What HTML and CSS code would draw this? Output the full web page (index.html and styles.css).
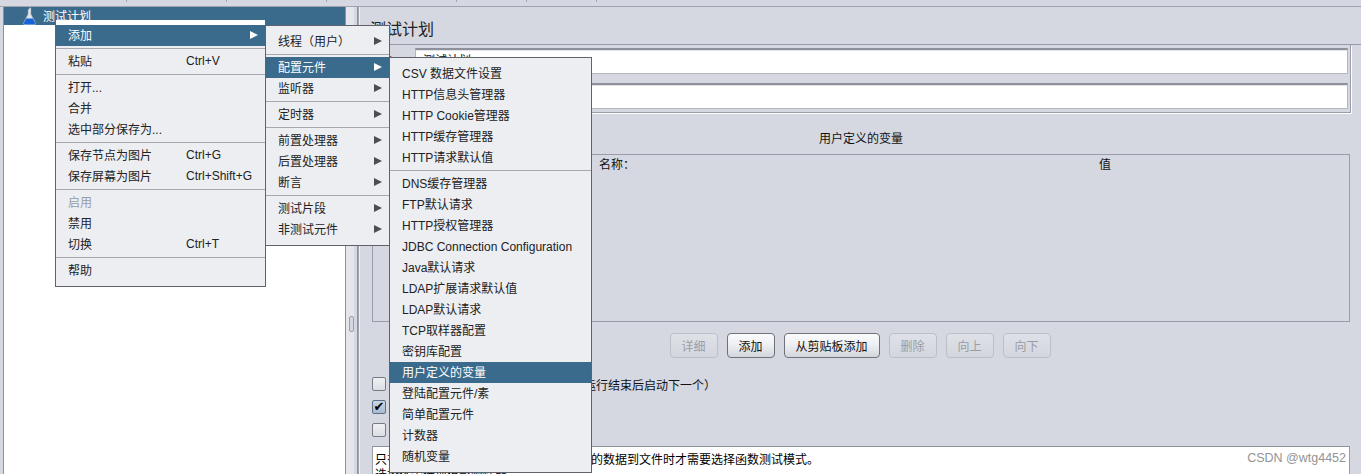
FILE: index.html
```html
<!DOCTYPE html>
<html lang="zh">
<head>
<meta charset="utf-8">
<title>JMeter 测试计划</title>
<link rel="stylesheet" href="styles.css">
</head>
<body>
<div class="app">
  <div class="toolbar"><i></i><i></i><i></i><i></i><i></i><i></i></div>
  <div class="workspace">
    <aside class="tree">
      <div class="tree-row">
        <svg class="flask" width="13" height="18" viewBox="0 0 13 18"><path d="M7 0.500l1 .5v6l4.300 8.500q.7 2-1 2.500H1.700q-1.700-.5-1-2.500L5 7V3z" fill="#dfe4ea" stroke="#8a97a6" stroke-width=".6"/><path d="M3.200 11.500h6.600l2.200 4.200q.2 1.800-1 1.800H2q-1.200 0-1-1.800z" fill="#1463d8"/></svg>
        <span>测试计划</span>
      </div>
    </aside>
    <div class="divider"><span class="grip"></span></div>
    <main class="panel">
      <h1 class="title">测试计划</h1>
      <section class="fields">
        <div class="field-row"><label>名称：</label><div class="input">测试计划</div></div>
        <div class="field-row"><label>注释：</label><div class="input"></div></div>
      </section>
      <h2 class="table-title">用户定义的变量</h2>
      <section class="vars">
        <div class="vars-head"><span>名称：</span><span>值</span></div>
      </section>
      <div class="buttons">
        <button class="btn off">详细</button>
        <button class="btn">添加</button>
        <button class="btn wide">从剪贴板添加</button>
        <button class="btn off">删除</button>
        <button class="btn off">向上</button>
        <button class="btn off">向下</button>
      </div>
      <div class="checks">
        <div class="check"><span class="box"></span>独立运行每个线程组（例如在一个组运行结束后启动下一个）</div>
        <div class="check"><span class="box on">✔</span>主线程结束后运行 tearDown 线程组</div>
        <div class="check"><span class="box"></span>函数测试模式</div>
      </div>
      <div class="note">只有当你需要记录每个请求从服务器取得的数据到文件时才需要选择函数测试模式。<br>选择这个选项很影响性能。</div>
    </main>
  </div>

  <nav class="menu menu-main">
    <div class="item sel">添加<b class="arrow"></b></div>
    <hr>
    <div class="item">粘贴<kbd>Ctrl+V</kbd></div>
    <hr>
    <div class="item">打开...</div>
    <div class="item">合并</div>
    <div class="item">选中部分保存为...</div>
    <hr>
    <div class="item">保存节点为图片<kbd>Ctrl+G</kbd></div>
    <div class="item">保存屏幕为图片<kbd>Ctrl+Shift+G</kbd></div>
    <hr>
    <div class="item dim">启用</div>
    <div class="item">禁用</div>
    <div class="item">切换<kbd>Ctrl+T</kbd></div>
    <hr>
    <div class="item">帮助</div>
  </nav>

  <nav class="menu menu-sub">
    <div class="item">线程（用户）<b class="arrow"></b></div>
    <hr>
    <div class="item sel">配置元件<b class="arrow"></b></div>
    <div class="item">监听器<b class="arrow"></b></div>
    <hr>
    <div class="item">定时器<b class="arrow"></b></div>
    <hr>
    <div class="item">前置处理器<b class="arrow"></b></div>
    <div class="item">后置处理器<b class="arrow"></b></div>
    <div class="item">断言<b class="arrow"></b></div>
    <hr>
    <div class="item">测试片段<b class="arrow"></b></div>
    <div class="item">非测试元件<b class="arrow"></b></div>
  </nav>

  <nav class="menu menu-config">
    <div class="item">CSV 数据文件设置</div>
    <div class="item">HTTP信息头管理器</div>
    <div class="item">HTTP Cookie管理器</div>
    <div class="item">HTTP缓存管理器</div>
    <div class="item">HTTP请求默认值</div>
    <hr>
    <div class="item">DNS缓存管理器</div>
    <div class="item">FTP默认请求</div>
    <div class="item">HTTP授权管理器</div>
    <div class="item">JDBC Connection Configuration</div>
    <div class="item">Java默认请求</div>
    <div class="item">LDAP扩展请求默认值</div>
    <div class="item">LDAP默认请求</div>
    <div class="item">TCP取样器配置</div>
    <div class="item">密钥库配置</div>
    <div class="item sel">用户定义的变量</div>
    <div class="item">登陆配置元件/素</div>
    <div class="item">简单配置元件</div>
    <div class="item">计数器</div>
    <div class="item">随机变量</div>
  </nav>

  <div class="watermark">CSDN @wtg4452</div>
</div>
</body>
</html>
```
FILE: styles.css
```css
* { box-sizing: border-box; }
html, body { margin: 0; padding: 0; }
body {
  font-family: "Liberation Sans", "Noto Sans CJK SC", sans-serif;
  font-size: 12px;
  color: #111;
  background: #d5d8e1;
}
.app {
  position: relative;
  width: 1361px;
  height: 474px;
  overflow: hidden;
  display: flex;
  flex-direction: column;
}
.toolbar {
  height: 7px;
  flex: none;
  display: flex;
  border-bottom: 1px solid #a0a3ad;
  padding-left: 126px;
}
.toolbar i {
  width: 1px;
  height: 2px;
  background: #a0a3ad;
  margin-right: 99px;
}
.toolbar i:nth-child(3) { margin-right: 129px; }
.toolbar i:nth-child(4), .toolbar i:nth-child(5) { margin-right: 69px; }
.workspace {
  flex: 1;
  display: flex;
  min-height: 0;
  padding-left: 3px;
}
.tree {
  width: 342px;
  flex: none;
  background: #fff;
  border-left: 1px solid #8e919c;
}
.tree-row {
  height: 18px;
  background: #3a6a8c;
  color: #fff;
  display: flex;
  align-items: center;
  gap: 7px;
  padding-left: 19px;
  font-size: 12px;
}
.tree-row span { margin-top: -2px; }
.flask { flex: none; }
.divider {
  width: 13px;
  flex: none;
  border-left: 1px solid #8e919c;
  border-right: 1px solid #8e919c;
  background: #e4e6ec;
  box-shadow: inset -3px 0 0 #d5d8e1;
  display: flex;
  justify-content: center;
  padding-top: 309px;
}
.grip {
  width: 5px;
  height: 16px;
  border: 1px solid #9a9da8;
  border-radius: 2px;
  background: #d5d8e1;
}
.panel {
  flex: 1;
  min-width: 0;
  padding: 0 11px 0 13px;
  border-left: 1px solid #a0a3ad;
  box-shadow: inset 1px 0 0 #eef0f4;
}
.title {
  margin: 0 -11px 0 -13px;
  height: 38px;
  padding: 11px 0 0 11px;
  font-size: 16px;
  line-height: 24px;
  font-weight: 400;
  color: #222;
  border-bottom: 1px solid #9a9da8;
}
.fields {
  margin-right: -1px;
  border-bottom: 1px solid #9a9da8;
  border-right: 1px solid #9a9da8;
  box-shadow: 1px 1px 0 #fff;
  height: 68px;
  padding: 3px 2px 2px 0;
  display: flex;
  flex-direction: column;
  gap: 9px;
}
.field-row {
  display: flex;
  align-items: center;
  height: 26px;
}
.field-row label { width: 43px; flex: none; }
.input {
  flex: 1;
  height: 26px;
  background: #fff;
  border: 1px solid #b4b6bc;
  border-top: 2px solid #8e919c;
  box-shadow: inset 0 1px 0 #e2e3e6;
  padding-left: 7px;
  line-height: 22px;
}
.table-title {
  margin: 0;
  height: 41px;
  padding-top: 18px;
  text-align: center;
  font-size: 12px;
  line-height: 16px;
  font-weight: 400;
}
.vars {
  height: 168px;
  border: 1px solid #9a9da8;
}
.vars-head {
  display: grid;
  grid-template-columns: 1fr 1fr;
  height: 20px;
  line-height: 20px;
  text-align: center;
  color: #111;
}
.buttons {
  display: flex;
  justify-content: center;
  gap: 9px;
  margin-top: 11px;
  padding-right: 2px;
}
.btn {
  width: 48px;
  height: 25px;
  padding: 0;
  font: inherit;
  color: #111;
  border: 1px solid #6f7278;
  border-radius: 4px;
  background: linear-gradient(#fbfbfc, #eef0f3 45%, #d3d6dc);
}
.btn.wide { width: 96px; }
.btn.off {
  color: #9a9ca3;
  border-color: #bcbfc7;
  background: linear-gradient(#dfe1e7, #d3d6de);
}
.checks {
  margin-top: 19px;
  display: flex;
  flex-direction: column;
  gap: 9px;
  height: 70px;
}
.check {
  display: flex;
  align-items: center;
  gap: 6px;
  height: 14px;
  white-space: nowrap;
}
.box {
  width: 14px;
  height: 14px;
  flex: none;
  border: 1px solid #777b84;
  border-radius: 2px;
  background: linear-gradient(#eff0f3, #dcdee4);
}
.box.on {
  background: linear-gradient(#c9d6e4, #a7bcd2);
  border-color: #5d6f86;
  color: #000;
  font-size: 13px;
  line-height: 12px;
  text-align: center;
  font-family: "DejaVu Sans", sans-serif;
}
.note {
  height: 40px;
  background: #fff;
  border-top: 1px solid #8e919c;
  border-left: 1px solid #9a9da8;
  border-right: 1px solid #9a9da8;
  padding: 6px 2px 0;
  line-height: 15px;
  color: #000;
  margin-top: -1px;
}

.menu {
  position: absolute;
  background: #eceef2;
  border: 1px solid #5f6268;
  z-index: 2;
}
.menu hr {
  margin: 2px 0;
  height: 1px;
  border: 0;
  background: #a6a8ae;
}
.item {
  position: relative;
  height: 21px;
  line-height: 22px;
  padding-left: 12px;
  color: #222;
  white-space: nowrap;
}
.item.sel { background: #3a6a8c; color: #fff; }
.item.dim { color: #9a9ca2; }
.item kbd {
  position: absolute;
  left: 130px;
  top: -1px;
  font: inherit;
}
.arrow {
  position: absolute;
  right: 7px;
  top: 6px;
  width: 0;
  height: 0;
  border-left: 8px solid #4c4e53;
  border-top: 4px solid transparent;
  border-bottom: 4px solid transparent;
}
.sel .arrow { border-left-color: #fff; }

.menu-main {
  left: 55px;
  top: 20px;
  width: 211px;
  height: 267px;
  padding-top: 5px;
  border-top: 0;
  box-shadow: inset 0 5px 0 #fff;
}
.menu-sub {
  left: 265px;
  top: 25px;
  width: 125px;
  height: 221px;
  padding-top: 5px;
}
.menu-config {
  left: 389px;
  top: 57px;
  width: 203px;
  height: 416px;
  padding-top: 5px;
}
.watermark {
  position: absolute;
  z-index: 3;
  right: 15px;
  bottom: 9px;
  font-size: 12.500px;
  line-height: 14px;
  color: #929496;
}
```
